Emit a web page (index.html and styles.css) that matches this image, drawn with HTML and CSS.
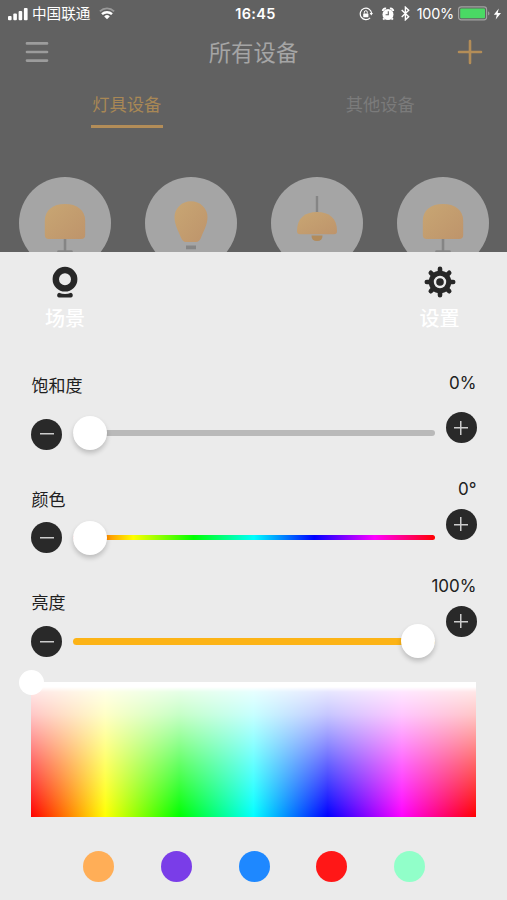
FILE: index.html
```html
<!DOCTYPE html>
<html lang="zh-CN">
<head>
<meta charset="utf-8">
<title>所有设备</title>
<link rel="stylesheet" href="styles.css">
</head>
<body>
<div class="screen">
  <div class="devices">
    <div class="status">
      <div class="status-left">
        <svg class="signal" width="20" height="14" viewBox="0 0 20 14" fill="#fff"><rect x="0" y="9" width="3.6" height="4.3" rx="1"/><rect x="5.3" y="6.6" width="3.6" height="6.7" rx="1"/><rect x="10.6" y="4" width="3.6" height="9.3" rx="1"/><rect x="15.9" y="1" width="3.7" height="12.3" rx="1"/></svg>
        <span class="carrier">中国联通</span>
        <svg class="wifi" width="16" height="13" viewBox="0 0 16 13" fill="none"><path d="M.9 4.3a10.3 10.3 0 0 1 14.2 0" stroke="#999" stroke-width="1.8"/><path d="M3 7.2a7.2 7.2 0 0 1 10 0" stroke="#fff" stroke-width="2.4"/><path d="M5.2 9.4a4.1 4.1 0 0 1 5.6 0L8 12.2z" fill="#fff"/></svg>
      </div>
      <span class="time">16:45</span>
      <div class="status-right">
        <svg width="14" height="14" viewBox="0 0 14 14" fill="none" stroke="#fff"><path d="M11.1 10.8A5.7 5.7 0 1 1 12.6 6" stroke-width="1.2"/><path d="M10.6 6h3.4l-1.7 2.6z" fill="#fff" stroke="none"/><rect x="4.2" y="6.4" width="5.2" height="3.9" rx=".5" fill="#fff" stroke="none"/><path d="M5.3 6.5V5.2a1.5 1.5 0 0 1 3 0v1.3"/></svg>
        <svg class="alarm" width="14" height="14" viewBox="0 0 14 14"><circle cx="7" cy="7.5" r="5.5" fill="#fff"/><path d="M1.8 4A2.4 2.4 0 0 1 5 1.7M9 1.7A2.4 2.4 0 0 1 12.2 4M3.2 11.3l-1 1.4m8.6-1.4 1 1.4" stroke="#fff" stroke-width="2" fill="none"/><path d="M7.3 4.3v3.4H4.6" stroke="#616161" stroke-width="1.1" fill="none"/></svg>
        <svg class="bluetooth" width="9" height="15" viewBox="0 0 9 15" fill="none" stroke="#fff" stroke-width="1.4"><path d="m.7 4 7 6.7-3.3 3.1V1.2l3.3 3.1L.7 11"/></svg>
        <span class="percent">100%</span>
        <svg class="battery" width="33" height="15" viewBox="0 0 33 15"><rect x=".6" y=".9" width="28" height="13" rx="2.6" fill="none" stroke="#a2a2a2" stroke-width="1.1"/><rect x="2.2" y="2.5" width="24.8" height="9.8" rx="1" fill="#4ad964"/><path d="M30.1 5.2c1.8.7 1.8 3.7 0 4.4z" fill="#a2a2a2"/></svg>
        <svg class="bolt" width="9" height="12" viewBox="0 0 9 12" fill="#fff"><path d="M5.8.5.8 6.8h3L2.7 11.5 8 4.9H4.7z"/></svg>
      </div>
    </div>
    <div class="navbar">
      <svg width="24" height="24" viewBox="0 0 24 24" stroke="#9c9c9c" stroke-width="2.7" stroke-linecap="round"><path d="M2 3.4h20M2 12h20M2 20.6h20"/></svg>
      <span class="title">所有设备</span>
      <svg width="26" height="26" viewBox="0 0 26 26" stroke="#b38d58" stroke-width="2.6" stroke-linecap="round"><path d="M13 2v22M2 13h22"/></svg>
    </div>
    <div class="tabs">
      <div class="tab active">灯具设备</div>
      <div class="tab">其他设备</div>
    </div>
    <div class="lamps">
      <svg class="lamp" viewBox="0 0 92 92">
        <defs><linearGradient id="shade" x1="0" y1="0" x2="1" y2="1"><stop offset="0" stop-color="#c8a673"/><stop offset="1" stop-color="#be946b"/></linearGradient></defs>
        <path d="M46 61v13M39.5 74.5h13" stroke="#858585" stroke-width="2.6" stroke-linecap="round"/><path d="M25.8 44C25.8 33 34 27 46 27s20.2 6 20.2 17v14q0 4-4 4H29.8q-4 0-4-4z" fill="url(#shade)"/></svg>
      <svg class="lamp" viewBox="0 0 92 92"><path d="M29.5 40a16.5 15.7 0 0 1 33 0c0 8-4 14-6.2 20-1.3 3.6-3 5-5.3 5H41c-2.3 0-4-1.4-5.3-5-2.2-6-6.2-12-6.2-20z" fill="url(#shade)"/><path d="M41 68.5h10v3.8H41zM44 75h4v2h-4z" fill="#858585"/></svg>
      <svg class="lamp" viewBox="0 0 92 92"><path d="M46 19v18" stroke="#858585" stroke-width="2.4"/><path d="M26 54C26 41 34 35 46 35s20 6 20 19q0 3.3-3 3.3H29q-3 0-3-3.3z" fill="url(#shade)"/><path d="M40.5 58.5h11q0 5.6-5.5 5.6t-5.5-5.6z" fill="#b28b5b"/></svg>
      <svg class="lamp" viewBox="0 0 92 92"><path d="M46 61v13M39.5 74.5h13" stroke="#858585" stroke-width="2.6" stroke-linecap="round"/><path d="M25.8 44C25.8 33 34 27 46 27s20.2 6 20.2 17v14q0 4-4 4H29.8q-4 0-4-4z" fill="url(#shade)"/></svg>
    </div>
  </div>

  <div class="sheet">
    <div class="actions">
      <div class="action">
        <svg width="34" height="34" viewBox="0 0 34 34"><circle cx="17" cy="14.2" r="9.2" fill="none" stroke="#272727" stroke-width="6.4"/><path d="M11 27.7q6 2.4 12 0c2.4.7 2.4 4.7 0 4.7H11c-2.4 0-2.4-4 0-4.7z" fill="#272727"/></svg>
        <span>场景</span>
      </div>
      <div class="action">
        <svg width="34" height="34" viewBox="-17 -17 34 34"><g stroke="#272727" stroke-width="4.6" stroke-linecap="round"><path d="M0-13.2v26.4M-13.2 0h26.4M-9.2-9.2 9.2 9.2M-9.2 9.2 9.2-9.2"/></g><circle r="11.3" fill="#272727"/><circle r="5" fill="#272727" stroke="#ebebeb" stroke-width="2.4"/></svg>
        <span>设置</span>
      </div>
    </div>

    <div class="setting saturation">
      <div class="main">
        <div class="label">饱和度</div>
        <div class="control">
          <div class="round minus"></div>
          <div class="slider"><div class="track"></div><div class="knob"></div></div>
        </div>
      </div>
      <div class="side"><div class="value">0%</div><div class="round plus"></div></div>
    </div>
    <div class="setting hue">
      <div class="main">
        <div class="label">颜色</div>
        <div class="control">
          <div class="round minus"></div>
          <div class="slider"><div class="track"></div><div class="knob"></div></div>
        </div>
      </div>
      <div class="side"><div class="value">0°</div><div class="round plus"></div></div>
    </div>
    <div class="setting brightness">
      <div class="main">
        <div class="label">亮度</div>
        <div class="control">
          <div class="round minus"></div>
          <div class="slider"><div class="track"></div><div class="knob"></div></div>
        </div>
      </div>
      <div class="side"><div class="value">100%</div><div class="round plus"></div></div>
    </div>

    <div class="palette"><div class="picker"></div></div>
    <div class="presets">
      <div class="dot orange"></div>
      <div class="dot purple"></div>
      <div class="dot blue"></div>
      <div class="dot red"></div>
      <div class="dot mint"></div>
    </div>
  </div>
</div>
</body>
</html>
```
FILE: styles.css
```css
* { box-sizing: border-box; }
body { margin: 0; font-family: Inter, "Noto Sans CJK SC", sans-serif; }
svg { display: block; flex: none; }
.screen { width: 507px; height: 900px; overflow: hidden; background: #ebebeb; }

.devices { height: 252.4px; overflow: hidden; background: #616161; }
.status {
  display: grid;
  grid-template-columns: 1fr auto 1fr;
  align-items: center;
  height: 27px;
  padding: 0 5px 0 8px;
  color: #fff;
}
.status-left, .status-right { display: flex; align-items: center; }
.status-right { justify-content: flex-end; }
.carrier { margin-left: 4px; font-size: 14.6px; line-height: 20px; white-space: nowrap; }
.wifi { margin-left: 9px; }
.time { padding-left: 1px; font-size: 14.5px; font-weight: 600; letter-spacing: .3px; }
.alarm { margin-left: 8px; }
.bluetooth { margin-left: 6px; }
.percent { margin-left: 7px; font-size: 14.4px; letter-spacing: -.2px; }
.battery { margin-left: 4px; }
.bolt { margin-left: 2px; }

.navbar {
  display: flex;
  align-items: center;
  justify-content: space-between;
  height: 50px;
  padding: 0 24px 0 25px;
}
.title { padding: 1px 0 0 1px; font-size: 22.4px; line-height: 30px; color: #a5a5a5; }

.tabs { display: flex; height: 51px; }
.tab {
  display: flex;
  flex: 1;
  flex-direction: column;
  align-items: center;
  padding-top: 14.5px;
  font-size: 17.3px;
  line-height: 25px;
  color: #7b7b7b;
}
.tab.active { color: #a98855; }
.tab.active::after {
  content: "";
  width: 72px;
  height: 3.5px;
  margin-top: 8px;
  background: #b38d58;
}

.lamps { display: flex; gap: 34px; padding: 49px 0 0 19px; }
.lamp { width: 92px; height: 92px; border-radius: 50%; background: #a5a5a5; }

.sheet { height: 647.6px; background: #ebebeb; }
.actions { display: flex; justify-content: space-between; height: 117.6px; padding: 12.3px 36.5px 0 34px; }
.action { display: flex; flex-direction: column; align-items: center; width: 62px; height: 72px; }
.action span { margin-top: 6px; font-size: 20px; font-weight: 500; line-height: 28px; color: #fff; }

.setting { display: flex; justify-content: space-between; padding: 0 30.5px 0 31.5px; }
.saturation { height: 110px; padding-top: 4.5px; }
.hue { height: 104px; padding-top: 8px; }
.brightness { height: 98px; padding-top: 7.5px; }

.main { width: 404px; }
.label { font-size: 17px; line-height: 24px; color: #202020; }
.control { display: flex; align-items: center; gap: 11px; height: 35px; margin: 8.5px 0 0 -.5px; }
.saturation .control { margin-top: 17px; }
.saturation .minus { margin-top: 2.5px; }

.round {
  flex: none;
  width: 31px;
  height: 31px;
  border-radius: 50%;
  background:
    linear-gradient(#ccc, #ccc) center / 14px 1.5px no-repeat,
    #292929;
}
.plus {
  background:
    linear-gradient(#ccc, #ccc) center / 14px 1.5px no-repeat,
    linear-gradient(#ccc, #ccc) center / 1.5px 14px no-repeat,
    #292929;
}

.slider { display: flex; align-items: center; flex: 1; height: 35px; }
.track { flex: none; width: 362px; height: 6.4px; border-radius: 4px; background: #b9b9b9; }
.hue .track { height: 5px; background: linear-gradient(90deg, #f00, #ff0, #0f0, #0ff, #00f, #f0f, #f00); }
.brightness .track { background: #fcb316; }
.knob {
  flex: none;
  width: 34px;
  height: 34px;
  margin-left: -362.5px;
  border-radius: 50%;
  background: #fff;
  box-shadow: 0 3px 5px rgba(0, 0, 0, .2);
}
.brightness .knob { margin-left: -34px; }

.side { display: flex; flex-direction: column; align-items: flex-end; width: 31px; }
.value { font-size: 17px; line-height: 24px; white-space: nowrap; color: #202020; }
.saturation .side { margin-top: -3px; }
.hue .side { margin-top: -11px; }
.brightness .side { margin-top: -17.5px; }
.side .plus { margin-top: 8px; }
.saturation .side .plus { margin-top: 17px; }

.palette {
  position: relative;
  height: 135px;
  margin: 0 31px 0 31px;
  background:
    linear-gradient(#fff 5px, rgba(255, 255, 255, .9) 10px, rgba(255, 255, 255, .78) 24%, rgba(255, 255, 255, .4) 60%, rgba(255, 255, 255, 0) 100%),
    linear-gradient(90deg, #f00, #ff0, #0f0, #0ff, #00f, #f0f, #f00);
}
.picker {
  position: absolute;
  top: -11.5px;
  left: -12px;
  width: 25px;
  height: 25px;
  border-radius: 50%;
  background: #fff;
}

.presets { display: flex; justify-content: space-between; padding: 34px 82px 0 83.3px; }
.dot { width: 31px; height: 31px; border-radius: 50%; }
.orange { background: #ffae57; }
.purple { background: #7a3de8; }
.blue { background: #1e88ff; }
.red { background: #ff1717; }
.mint { background: #91ffc9; }
```
